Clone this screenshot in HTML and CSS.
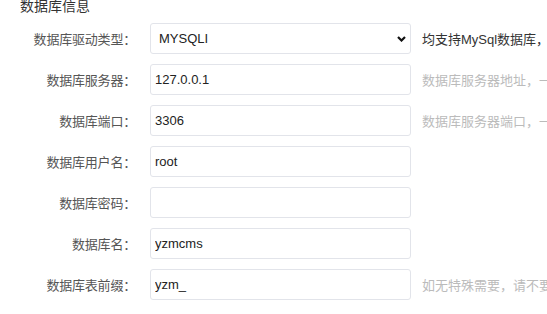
FILE: index.html
```html
<!DOCTYPE html>
<html lang="zh-CN">
<head>
    <meta charset="UTF-8">
    <meta name="viewport" content="width=device-width, initial-scale=1.0">
    <title>数据库信息</title>
    <link rel="stylesheet" href="styles.css">
</head>
<body>
<div class="section-title">数据库信息</div>
<form class="db-form">
    <div class="form-row">
        <label class="form-label" for="dbtype">数据库驱动类型：</label>
        <div class="select-wrap">
            <select id="dbtype" class="form-input form-select">
                <option>MYSQLI</option>
            </select>
            <svg class="select-arrow" width="9" height="6" viewBox="0 0 9 6">
                <path d="M1 1 L4.5 4.5 L8 1" fill="none" stroke="#111" stroke-width="2.2"/>
            </svg>
        </div>
        <span class="form-tip tip-dark">均支持MySql数据库，<span class="tip-warn">如</span></span>
    </div>
    <div class="form-row">
        <label class="form-label" for="dbhost">数据库服务器：</label>
        <input type="text" id="dbhost" class="form-input" value="127.0.0.1">
        <span class="form-tip">数据库服务器地址，一般为localhost</span>
    </div>
    <div class="form-row">
        <label class="form-label" for="dbport">数据库端口：</label>
        <input type="text" id="dbport" class="form-input" value="3306">
        <span class="form-tip">数据库服务器端口，一般为3306</span>
    </div>
    <div class="form-row">
        <label class="form-label" for="dbuser">数据库用户名：</label>
        <input type="text" id="dbuser" class="form-input" value="root">
    </div>
    <div class="form-row">
        <label class="form-label" for="dbpw">数据库密码：</label>
        <input type="password" id="dbpw" class="form-input" value="">
    </div>
    <div class="form-row">
        <label class="form-label" for="dbname">数据库名：</label>
        <input type="text" id="dbname" class="form-input" value="yzmcms">
    </div>
    <div class="form-row">
        <label class="form-label" for="tablepre">数据库表前缀：</label>
        <input type="text" id="tablepre" class="form-input" value="yzm_">
        <span class="form-tip">如无特殊需要，请不要修改</span>
    </div>
</form>
</body>
</html>
```

FILE: styles.css
```css
body {
    margin: 0;
    font-family: "Liberation Sans", "Noto Sans CJK SC", sans-serif;
    font-size: 13px;
    color: #333;
    background-color: #fff;
    overflow: hidden;
}
.section-title {
    padding-left: 20px;
    font-size: 14px;
    line-height: 14px;
    margin-top: -1px;
    color: #333;
}
.db-form {
    margin-top: 10px;
}
.form-row {
    display: flex;
    align-items: center;
    height: 31px;
    margin-bottom: 10px;
    white-space: nowrap;
}
.form-label {
    width: 136px;
    text-align: right;
    padding-right: 14px;
    color: #555;
    font-size: 13px;
    letter-spacing: -0.2px;
    flex-shrink: 0;
}
.form-input {
    box-sizing: border-box;
    width: 261px;
    height: 31px;
    padding: 0 4px;
    border: 1px solid #e2e4ea;
    border-radius: 3px;
    font-family: "Liberation Sans", "Noto Sans CJK SC", sans-serif;
    font-size: 13px;
    color: #222;
    background-color: #fff;
    outline: none;
    flex-shrink: 0;
}
.select-wrap {
    position: relative;
    flex-shrink: 0;
}
.form-select {
    appearance: none;
    -webkit-appearance: none;
    display: block;
    padding-left: 8px;
}
.select-arrow {
    position: absolute;
    right: 5px;
    top: 13px;
}
.form-tip {
    margin-left: 11px;
    color: #bbb;
    font-size: 13px;
}
.tip-dark {
    color: #333;
}
.tip-warn {
    color: #f5a623;
}
```
